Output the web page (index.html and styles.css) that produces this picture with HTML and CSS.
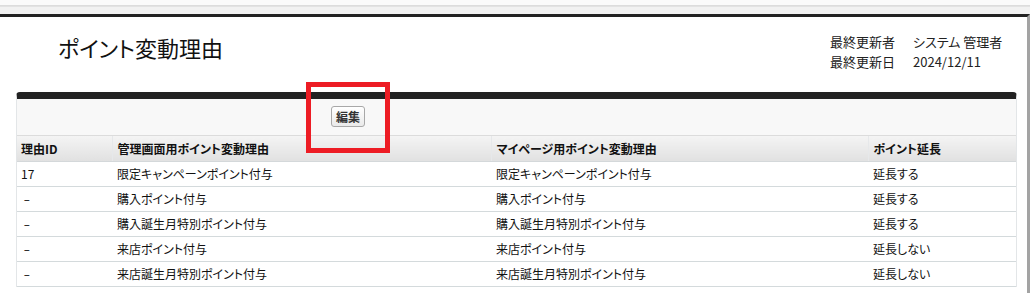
FILE: index.html
```html
<!DOCTYPE html>
<html lang="ja">
<head>
<meta charset="utf-8">
<title>ポイント変動理由</title>
<link rel="stylesheet" href="styles.css">
</head>
<body>
<div class="chrome"></div>
<div class="frame">
  <div class="page-head">
    <h1 class="title">ポイント変動理由</h1>
    <dl class="meta">
      <dt>最終更新者</dt><dd>システム 管理者</dd>
      <dt>最終更新日</dt><dd>2024/12/11</dd>
    </dl>
  </div>
  <div class="panel">
    <div class="btn-bar">
      <button class="btn" type="button">編集</button>
      <div class="highlight"></div>
    </div>
    <table class="list">
      <colgroup>
        <col class="c1"><col class="c2"><col class="c3"><col class="c4">
      </colgroup>
      <thead>
        <tr><th>理由ID</th><th>管理画面用ポイント変動理由</th><th>マイページ用ポイント変動理由</th><th>ポイント延長</th></tr>
      </thead>
      <tbody>
        <tr><td>17</td><td>限定キャンペーンポイント付与</td><td>限定キャンペーンポイント付与</td><td>延長する</td></tr>
        <tr><td class="dash">-</td><td>購入ポイント付与</td><td>購入ポイント付与</td><td>延長する</td></tr>
        <tr><td class="dash">-</td><td>購入誕生月特別ポイント付与</td><td>購入誕生月特別ポイント付与</td><td>延長する</td></tr>
        <tr><td class="dash">-</td><td>来店ポイント付与</td><td>来店ポイント付与</td><td>延長しない</td></tr>
        <tr><td class="dash">-</td><td>来店誕生月特別ポイント付与</td><td>来店誕生月特別ポイント付与</td><td>延長しない</td></tr>
      </tbody>
    </table>
  </div>
</div>
</body>
</html>
```

FILE: styles.css
```css
* { box-sizing: border-box; }
html, body {
  margin: 0;
  padding: 0;
  background: #ffffff;
  width: 1030px;
  height: 293px;
  overflow: hidden;
  font-family: "Noto Sans CJK JP", "Liberation Sans", sans-serif;
  font-feature-settings: "palt";
  color: #111;
}
.chrome {
  height: 14px;
  background: #f1f1f1;
  border-top: 5px solid #fafafa;
  box-shadow: inset 0 1px 0 #dcdcdc, inset 0 2px 0 #e2e2e2;
}
.frame {
  width: 1030px;
  height: 279px;
  border-top: 3px solid #222;
  border-right: 3px solid #a3a3a3;
  background: #fff;
}
.page-head {
  display: flex;
  height: 75px;
}
.title {
  margin: 18px 0 0 58px;
  font-size: 22px;
  line-height: 24px;
  font-weight: normal;
  color: #111;
  flex: 1;
}
.meta {
  margin: 15px 0 0 0;
  width: 197px;
  display: grid;
  grid-template-columns: 83px 1fr;
  align-content: start;
  font-size: 13px;
  line-height: 20px;
  color: #222;
}
.meta dt, .meta dd { margin: 0; }
.panel {
  margin-left: 16px;
  width: 1001px;
  border-top: 7px solid #222;
  border-radius: 4px 4px 0 0;
  border-left: 1px solid #e3e6e8;
  border-right: 1px solid #e3e6e8;
}
.btn-bar {
  position: relative;
  height: 37px;
  background: #f8f8f8;
  padding: 7px 0 0 314px;
  border-bottom: 1px solid #dcdcdc;
}
.btn {
  display: block;
  width: 34px;
  height: 21px;
  padding: 0;
  font-family: inherit;
  font-size: 12px;
  font-weight: bold;
  line-height: 19px;
  color: #333;
  background: linear-gradient(#ffffff, #eaeaea);
  border: 1px solid #a8a8a8;
  border-radius: 3px;
}
.highlight {
  position: absolute;
  left: 289px;
  top: -17px;
  width: 84px;
  height: 71px;
  border: 5px solid #ed1c24;
}
.list {
  width: 999px;
  border-collapse: collapse;
  table-layout: fixed;
  font-size: 12px;
}
.c1 { width: 95px; }
.c2 { width: 379px; }
.c3 { width: 377px; }
.c4 { width: 148px; }
.list th {
  height: 25px;
  padding: 0 5px;
  text-align: left;
  font-weight: bold;
  color: #111;
  background: linear-gradient(#f4f4f4, #e1e1e1);
  border-bottom: 1px solid #d4d8da;
  border-left: 1px solid #e6e8ea;
}
.list th:first-child { border-left: none; padding-left: 4px; }
.list td {
  height: 25px;
  padding: 0 5px;
  font-weight: normal;
  color: #111;
  border-bottom: 1px solid #d4dadc;
  white-space: nowrap;
}
.list td:first-child { padding-left: 4px; }
.list td.dash { font-size: 12px; transform: scaleX(1.6); transform-origin: left center; }
```
